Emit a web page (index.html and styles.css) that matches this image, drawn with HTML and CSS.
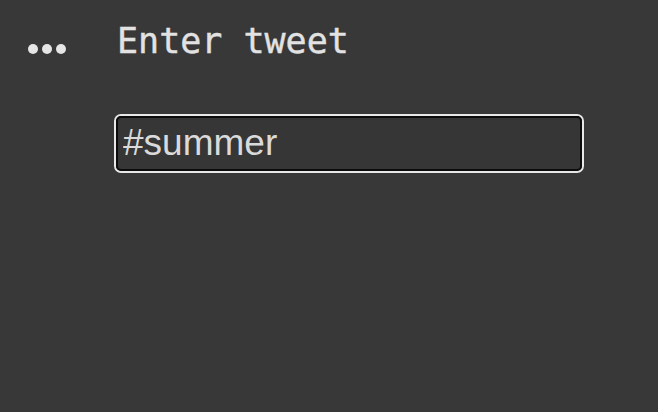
FILE: index.html
```html
<!DOCTYPE html>
<html>
<head>
    <title>Enter tweet</title>
    <link rel="stylesheet" href="styles.css">
</head>
<body>
    <div class="panel">
        <div class="menu">
            <span class="dot"></span>
            <span class="dot"></span>
            <span class="dot"></span>
        </div>
        <div class="content">
            <h1 class="title">Enter tweet</h1>
            <div class="field">
                <input type="text" class="tweet-input" value="#summer">
            </div>
        </div>
    </div>
</body>
</html>
```

FILE: styles.css
```css
html, body {
    margin: 0;
    height: 100%;
}

body {
    background-color: #383838;
    color: #e2e2e2;
}

.panel {
    display: flex;
    padding: 0 0 0 28px;
}

.menu {
    display: flex;
    gap: 4px;
    width: 86px;
    padding-top: 44px;
}

.dot {
    width: 10px;
    height: 10px;
    border-radius: 50%;
    background-color: #e6e6e6;
}

.content {
    display: flex;
    flex-direction: column;
}

.title {
    margin: 0;
    padding-top: 20px;
    padding-left: 3px;
    font-family: 'DejaVu Sans Mono', monospace;
    font-size: 35px;
    font-weight: normal;
    line-height: 42px;
    color: #e2e2e2;
    -webkit-text-stroke: 0.4px #e2e2e2;
}

.field {
    margin-top: 52px;
    width: 470px;
    height: 59px;
    box-sizing: border-box;
    border: 2px solid #e8e8e8;
    border-radius: 7px;
    padding: 0;
}

.tweet-input {
    display: block;
    width: 100%;
    height: 100%;
    box-sizing: border-box;
    margin: 0;
    border: 2px solid #0c0c0c;
    border-radius: 5px;
    background-color: #363636;
    color: #dadada;
    font-family: 'Liberation Sans', Arial, sans-serif;
    font-size: 37px;
    padding: 0 0 2px 5px;
    outline: none;
}
```
